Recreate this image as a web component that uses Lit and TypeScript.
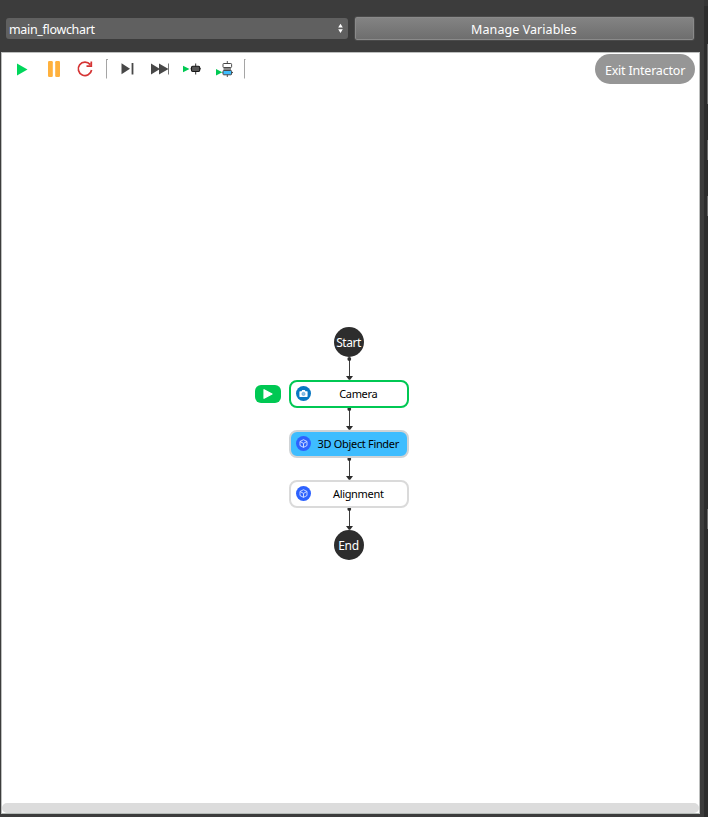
import { LitElement, html, css, svg } from "lit";
import { customElement, property } from "lit/decorators.js";

const cube = svg`<path d="M7.5 3.7L11 5.5V9.5L7.5 11.4L4 9.5V5.5Z M4 5.5L7.5 7.4L11 5.5 M7.5 7.4V11.4" fill="none" stroke="#d3ddff" stroke-width=".95" stroke-linejoin="round"/>`;
const camera = svg`<path d="M4 5.2H5.5L6.2 4H8.8L9.5 5.2H11Q11.6 5.2 11.6 5.8V10.3Q11.6 10.9 11 10.9H4Q3.4 10.9 3.4 10.3V5.8Q3.4 5.2 4 5.2Z" fill="#fff"/><circle cx="7.5" cy="7.9" r="1.6" fill="#8fc1e4" stroke="#4a9bd2" stroke-width=".6"/>`;

@customElement("flow-link")
class FlowLink extends LitElement {
  static styles = css`
    :host { display: block; width: 11px; height: 23px; }
    svg { display: block; }
  `;
  render() {
    return html`<svg width="11" height="23" viewBox="0 0 11 23">
      <path d="M5.5 2V20" stroke="#3c3c3c" stroke-width="1"/>
      <circle cx="5.3" cy="2" r="1.9" fill="#2d2d2d"/>
      <path d="M2 19H9L6.2 22.7H4.8Z" fill="#2d2d2d"/>
    </svg>`;
  }
}

@customElement("flow-node")
class FlowNode extends LitElement {
  @property() label = "";
  @property() kind = "cube";
  @property({ reflect: true }) state = "idle";
  static styles = css`
    :host {
      display: flex; align-items: center; box-sizing: border-box; width: 120px; height: 28px;
      margin-bottom: -1px; padding-left: 5px; border: 2px solid #dadada; border-radius: 8px; background: #fff;
      font-size: 11px; letter-spacing: -.33px; color: #000; position: relative;
    }
    :host([state="running"]) { border-color: #00c853; }
    :host([state="selected"]) { background: #3ebdff; border-color: #cfd3d6; }
    svg { display: block; flex: none; margin-top: -1px; }
    .label { flex: 1; text-align: center; white-space: nowrap; line-height: 16px; padding-right: 1.5px; }
  `;
  render() {
    const isCamera = this.kind === "camera";
    return html`<svg width="15" height="15" viewBox="0 0 15 15">
        <circle cx="7.5" cy="7.5" r="7.5" fill=${isCamera ? "#0a78c2" : "#2d62ff"}/>
        ${isCamera ? camera : cube}
      </svg>
      <span class="label">${this.label}</span>`;
  }
}

@customElement("app-root")
class AppRoot extends LitElement {
  static styles = css`
    :host {
      display: grid; grid-template-columns: 704px 4px; width: 708px; height: 817px; overflow: hidden;
      background: #3c3c3c; font-family: "Noto Sans", "Open Sans", sans-serif; font-size: 12.5px; color: #fff;
    }
    .main { display: flex; flex-direction: column; }
    .header { display: flex; height: 52px; padding: 16px 9px 0 6px; gap: 6px; box-sizing: border-box; }
    .select {
      display: flex; align-items: center; justify-content: space-between; box-sizing: border-box;
      width: 342px; height: 21px; margin-top: 2px; padding: 0 4px 0 3px; border-radius: 3px; background: #606060;
    }
    .select span { letter-spacing: -.33px; line-height: 19px; padding-top: 2px; }
    .manage {
      box-sizing: border-box; width: 341px; height: 25px; border: 1px solid #4a4a4a; border-radius: 3px;
      background: linear-gradient(#848484, #6d6d6d); box-shadow: inset 0 0 0 1px #8a8a8a;
      text-align: center; line-height: 25px; letter-spacing: .07px; padding-right: 1px;
    }
    .panel {
      display: flex; flex-direction: column; box-sizing: border-box; width: 699px; height: 762px; margin-left: 1px;
      background: #fff; border: 1px solid #bdbfbe; border-bottom-color: #b5bbb7;
    }
    .toolbar { display: flex; height: 32px; padding-right: 4px; }
    .tools { display: block; }
    .exit {
      margin: 1px 0 0 auto; width: 100px; height: 30px; border-radius: 15px; background: #969696;
      text-align: center; line-height: 33px; letter-spacing: -.2px;
    }
    .canvas { flex: 1; }
    .flow { display: flex; flex-direction: column; align-items: center; width: 120px; margin: 242px 0 0 287px; }
    .terminal {
      box-sizing: border-box; width: 30px; height: 30px; padding: 2px 1px 0 0; border-radius: 50%; background: #2d2d2d; font-size: 12px; letter-spacing: -.45px;
      display: flex; align-items: center; justify-content: center; white-space: nowrap; line-height: 16px;
    }
    .terminal.end { letter-spacing: -.3px; }
    .step { position: relative; }
    .badge { position: absolute; left: -34px; top: 5px; }
    .flow flow-link { margin-left: 1px; }
    .scroll { height: 10px; border-radius: 5px; background: #dcdcdc; }
    .rail { background: #2d2d2d; display: flex; flex-direction: column; align-items: flex-end; }
    .rail svg { display: block; }
  `;
  render() {
    return html`
      <div class="main">
        <div class="header">
          <div class="select"><span>main_flowchart</span>
            <svg width="7" height="11" viewBox="0 0 7 11"><path d="M3.5 .8L5.8 4.6H1.2ZM1.2 6.2H5.8L3.5 10Z" fill="#fff"/></svg>
          </div>
          <div class="manage">Manage Variables</div>
        </div>
        <div class="panel">
          <div class="toolbar">
            <svg class="tools" width="250" height="32" viewBox="2 53 250 32">
              <path d="M17 63.5L27.5 69.5L17 75.5Z" fill="#00d65b"/>
              <rect x="48" y="61" width="4.8" height="16" rx="1.2" fill="#ffb13d"/>
              <rect x="55.2" y="61" width="4.8" height="16" rx="1.2" fill="#ffb13d"/>
              <path d="M90.2 64.6A6.7 6.7 0 1 0 91.6 70M91.3 61.5V66.1H86.5" fill="none" stroke="#d53434" stroke-width="1.7"/>
              <path d="M106.5 59V78.5M106 59.5H108M244.5 59V78.5M244 59.5H245.5" stroke="#a5a5a5" stroke-width="1" fill="none"/>
              <path d="M121.5 63.2L130 68.8L121.5 74.3Z" fill="#484848"/><path d="M132.5 63V74.5" stroke="#484848" stroke-width="1.8"/>
              <path d="M151 63.5L160 69L151 74.5ZM159 63.5L168.5 69L159 74.5Z" fill="#484848"/><path d="M168.5 63.5V74.5" stroke="#777" stroke-width="1"/>
              <path d="M183 65.7L189.5 69L183 72.3Z" fill="#00c953"/>
              <path d="M190.5 68.8H201M195.7 63.5V74.5" stroke="#333" stroke-width="1"/>
              <rect x="191.5" y="66.3" width="8.2" height="5.2" rx="1.2" fill="#555" stroke="#171717" stroke-width="1.1"/>
              <path d="M216 69L222.3 72.3L216 75.6Z" fill="#00c953"/>
              <path d="M227.3 61V77M222.5 72.5H233" stroke="#555" stroke-width="1"/>
              <rect x="223.5" y="67.5" width="7.5" height="3" fill="#888"/>
              <rect x="223" y="63.5" width="8.6" height="4" rx=".8" fill="#fff" stroke="#484848" stroke-width="1"/>
              <rect x="223" y="70.5" width="8.6" height="4.3" rx=".8" fill="#3ebdff" stroke="#484848" stroke-width="1"/>
            </svg>
            <div class="exit">Exit Interactor</div>
          </div>
          <div class="canvas">
            <div class="flow">
              <div class="terminal">Start</div>
              <flow-link></flow-link>
              <div class="step">
                <svg class="badge" width="26" height="18" viewBox="0 0 26 18"><rect width="26" height="18" rx="6" fill="#00c853"/><path d="M9 4.7L17 9L9 13.3Z" fill="#fff" stroke="#fff" stroke-width="1.2" stroke-linejoin="round"/></svg>
                <flow-node label="Camera" kind="camera" state="running"></flow-node>
              </div>
              <flow-link></flow-link>
              <flow-node label="3D Object Finder" state="selected"></flow-node>
              <flow-link></flow-link>
              <flow-node label="Alignment"></flow-node>
              <flow-link></flow-link>
              <div class="terminal end">End</div>
            </div>
          </div>
          <div class="scroll"></div>
        </div>
      </div>
      <div class="rail">
        <svg width="4" height="817" viewBox="0 0 4 817">
          <path d="M0 0H4V6H0Z" fill="#363636"/>
          <path d="M3 44H4V104H3ZM3 140H4V160H3ZM3 196H4V216H3ZM3 509H4V529H3Z" fill="#6a6a6a"/>
        </svg>
      </div>`;
  }
}
